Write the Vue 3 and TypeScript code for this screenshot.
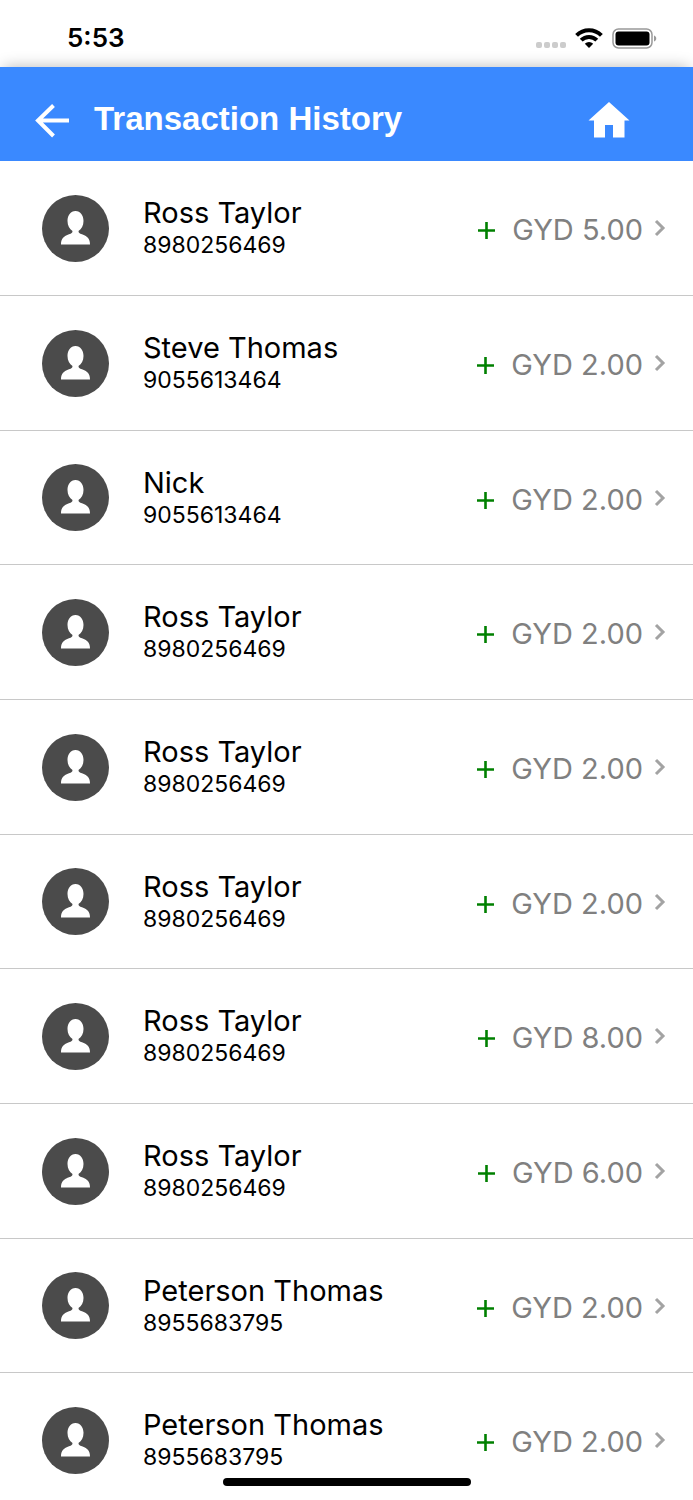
<script setup lang="ts">
interface Transaction {
  id: number
  name: string
  phone: string
  amount: string
}

const transactions: Transaction[] = [
  { id: 1, name: 'Ross Taylor', phone: '8980256469', amount: '5.00' },
  { id: 2, name: 'Steve Thomas', phone: '9055613464', amount: '2.00' },
  { id: 3, name: 'Nick', phone: '9055613464', amount: '2.00' },
  { id: 4, name: 'Ross Taylor', phone: '8980256469', amount: '2.00' },
  { id: 5, name: 'Ross Taylor', phone: '8980256469', amount: '2.00' },
  { id: 6, name: 'Ross Taylor', phone: '8980256469', amount: '2.00' },
  { id: 7, name: 'Ross Taylor', phone: '8980256469', amount: '8.00' },
  { id: 8, name: 'Ross Taylor', phone: '8980256469', amount: '6.00' },
  { id: 9, name: 'Peterson Thomas', phone: '8955683795', amount: '2.00' },
  { id: 10, name: 'Peterson Thomas', phone: '8955683795', amount: '2.00' },
]
</script>

<template>
  <div class="screen">
    <div class="status">
      <time class="clock">5:53</time>
      <div class="indicators">
        <span class="signal"><i v-for="n in 4" :key="n"></i></span>
        <svg class="wifi" viewBox="0 0 28 20" width="28" height="20" aria-hidden="true">
          <g fill="none" stroke="#000" stroke-width="4">
            <path d="M1.6 7.4a17.6 17.6 0 0 1 24.8 0" />
            <path d="M6.2 12.2a11 11 0 0 1 15.6 0" />
          </g>
          <path d="M14 20l-4.200-4.200a6.100 6.100 0 0 1 8.400 0z" />
        </svg>
        <svg class="battery" viewBox="0 0 45 21" width="45" height="21" aria-hidden="true">
          <rect x="1" y="1" width="39" height="19" rx="5.5" fill="none" stroke="#999" stroke-width="1.5" />
          <rect x="3.5" y="3.5" width="34" height="14" rx="3" />
          <path d="M42 7.5c3 1 3 5 0 6z" fill="#999" />
        </svg>
      </div>
    </div>

    <header class="bar">
      <button class="icon-button" type="button" aria-label="Back">
        <svg viewBox="0 0 36 36" width="36" height="36" fill="none" stroke="#fff" stroke-width="4">
          <path d="M35 18.500H4M19.500 3.500L4 18.500L19.500 34" />
        </svg>
      </button>
      <h1>Transaction History</h1>
      <button class="icon-button home" type="button" aria-label="Home">
        <svg viewBox="0 0 42 36" width="42" height="36" fill="#fff">
          <path d="M21 0L41.500 18.500H36.500V35.500H25V23H17V35.500H6V18.500H0.500z" />
        </svg>
      </button>
    </header>

    <ul class="list">
      <li v-for="item in transactions" :key="item.id">
        <button class="row" type="button">
          <svg class="avatar" viewBox="0 0 67 67" width="67" height="67" aria-hidden="true">
            <circle cx="33.500" cy="33.500" r="33.500" fill="#4b4b4b" />
            <path
              fill="#fff"
              d="M33.500 16C38.500 16 41.500 20.500 41.500 26C41.500 30.500 39.500 34 36.500 36C36.500 38 37.500 38.500 40 39.300C45 41 48 43.500 48 49.500H19C19 43.500 22 41 27 39.300C29.500 38.500 30.500 38 30.500 36C27.500 34 25.500 30.500 25.500 26C25.500 20.500 28.500 16 33.500 16z"
            />
          </svg>
          <span class="person">
            <span class="name">{{ item.name }}</span>
            <span class="phone">{{ item.phone }}</span>
          </span>
          <svg class="plus" viewBox="0 0 17 17" width="17" height="17" aria-label="Credit">
            <path d="M8.500 0V17M0 8.500H17" stroke="#008000" stroke-width="2.600" />
          </svg>
          <span class="amount">GYD {{ item.amount }}</span>
          <svg class="chevron" viewBox="0 0 12 18" width="12" height="18" aria-hidden="true">
            <path d="M2 2L9 9L2 16" fill="none" stroke="#a3a3a3" stroke-width="3" />
          </svg>
        </button>
      </li>
    </ul>
    <div class="home-indicator"></div>
  </div>
</template>

<style>
body {
  margin: 0;
  background: #fff;
}
</style>

<style scoped>
.screen {
  position: relative;
  display: flex;
  flex-direction: column;
  height: 100vh;
  overflow: hidden;
  background: #fff;
  color: #000;
  font-family: Inter, Roboto, sans-serif;
}

.status {
  display: flex;
  flex: none;
  align-items: center;
  justify-content: space-between;
  box-sizing: border-box;
  height: 67px;
  padding: 9px 36px 0 67px;
}

.clock {
  font-size: 26px;
  line-height: 32px;
  font-weight: 600;
}

.indicators {
  display: flex;
  align-items: center;
  gap: 9px;
}

.signal {
  display: flex;
  align-self: flex-end;
  gap: 2px;
  padding-bottom: 1px;
}

.signal i {
  width: 6px;
  height: 6px;
  border-radius: 2px;
  background: #ccc;
}

.bar {
  display: flex;
  flex: none;
  align-items: center;
  box-sizing: border-box;
  height: 94px;
  padding: 12px 63px 0 34px;
  background: #3a89ff;
  box-shadow: 0 -4px 14px -4px rgba(0, 0, 0, 0.28);
}

.bar h1 {
  flex: 1;
  margin: 0 0 2px 24px;
  color: #fff;
  font: bold 33px/40px "Liberation Sans", Arial, sans-serif;
}

button {
  margin: 0;
  padding: 0;
  border: 0;
  background: none;
  color: inherit;
  font: inherit;
  text-align: left;
  cursor: pointer;
}

svg {
  display: block;
  flex: none;
}

.list {
  position: relative;
  flex: 1;
  min-height: 0;
  margin: 0;
  padding: 0;
  overflow-y: auto;
  scrollbar-width: none;
  background: #fff;
  list-style: none;
}

.list li {
  border-bottom: 1px solid #c8c8c8;
}

.row {
  display: flex;
  align-items: center;
  box-sizing: border-box;
  width: 100%;
  height: 134px;
  padding: 0 27px 0 42px;
}

.list li:nth-child(3n) .row {
  height: 133px;
}

.person {
  display: flex;
  flex: 1;
  flex-direction: column;
  margin-left: 34px;
}

.name {
  font-size: 29px;
  line-height: 34px;
}

.phone {
  font-size: 23px;
  line-height: 30px;
}

.plus {
  margin: 5px 17px 0 0;
}

.amount {
  margin-top: 4px;
  color: #808080;
  font-size: 29px;
  line-height: 34px;
}

.chevron {
  margin-left: 11px;
}

.home-indicator {
  position: absolute;
  bottom: 14px;
  left: 50%;
  width: 248px;
  height: 8px;
  border-radius: 4px;
  background: #000;
  transform: translateX(-50%);
}
</style>
